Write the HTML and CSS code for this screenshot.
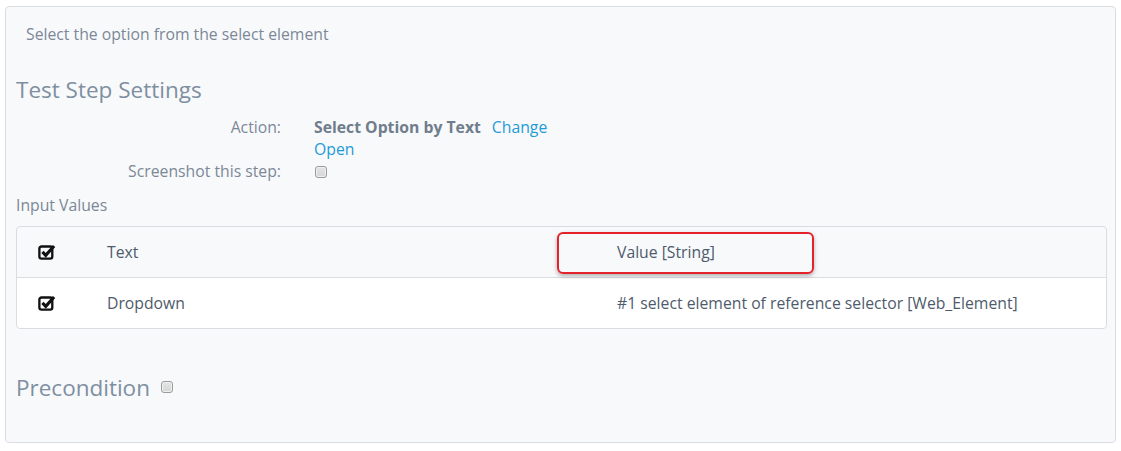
FILE: index.html
```html
<!DOCTYPE html>
<html>
<head>
<meta charset="utf-8">
<link rel="stylesheet" href="styles.css">
</head>
<body>
<div class="panel">
  <p class="desc">Select the option from the select element</p>
  <h2 class="heading">Test Step Settings</h2>
  <div class="form">
    <div class="label">Action:</div>
    <div class="value">
      <div><strong class="action-name">Select Option by Text</strong><a class="link change">Change</a></div>
      <div><a class="link">Open</a></div>
    </div>
    <div class="label">Screenshot this step:</div>
    <div class="value"><span class="box"></span></div>
  </div>
  <div class="section-label">Input Values</div>
  <div class="table">
    <div class="row">
      <div class="cell check"><svg width="18" height="17" viewBox="0 0 17 16"><rect x="1.3" y="3.3" width="12.2" height="11.4" rx="2" fill="none" stroke="#111" stroke-width="2.2"/><polyline points="4.2,8.4 7.3,11.6 15.2,2.8" fill="none" stroke="#111" stroke-width="3" stroke-linejoin="miter"/></svg></div>
      <div class="cell">Text</div>
      <div class="cell">Value [String]</div>
    </div>
    <div class="row alt">
      <div class="cell check"><svg width="18" height="17" viewBox="0 0 17 16"><rect x="1.3" y="3.3" width="12.2" height="11.4" rx="2" fill="none" stroke="#111" stroke-width="2.2"/><polyline points="4.2,8.4 7.3,11.6 15.2,2.8" fill="none" stroke="#111" stroke-width="3" stroke-linejoin="miter"/></svg></div>
      <div class="cell">Dropdown</div>
      <div class="cell">#1 select element of reference selector [Web_Element]</div>
    </div>
    <div class="highlight"></div>
  </div>
  <h2 class="heading precondition">Precondition <span class="box"></span></h2>
</div>
</body>
</html>
```

FILE: styles.css
```css
html, body {
  margin: 0;
  padding: 0;
  background: #ffffff;
}
body {
  font-family: "Open Sans", "Liberation Sans", sans-serif;
  color: #6f7d8c;
}
.panel {
  margin: 6px 5px 0 5px;
  width: 1091px;
  height: 435px;
  border: 1px solid #d9dde2;
  border-radius: 4px;
  background: #f8f9fb;
  padding: 0 8px 0 10px;
}
.desc {
  margin: 17px 0 0 10px;
  font-size: 15.75px;
  line-height: 20px;
  color: #7c8898;
}
.heading {
  margin: 30px 0 0 0;
  font-size: 22.5px;
  line-height: 32px;
  font-weight: 400;
  color: #7e8fa1;
}
.form {
  margin-top: 10px;
  display: grid;
  grid-template-columns: 265px 1fr;
  column-gap: 33px;
  font-size: 15.75px;
  line-height: 22px;
}
.label {
  text-align: right;
  color: #7c8898;
}
.action-name {
  font-weight: 700;
  color: #6f7d8c;
}
.link {
  color: #1f9bd7;
  text-decoration: none;
}
.change {
  margin-left: 11px;
}
.box {
  display: inline-block;
  width: 10px;
  height: 10px;
  border: 1px solid #9b9b9b;
  border-radius: 3px;
  background: linear-gradient(#e4e4e4, #d6d6d6);
  box-shadow: inset 0 0 0 1px #f0f0f0;
  vertical-align: middle;
}
.value .box {
  margin: 0 0 2px 1px;
}
.section-label {
  margin-top: 13px;
  font-size: 15.75px;
  line-height: 20px;
  color: #7c8898;
}
.table {
  position: relative;
  margin-top: 11px;
  border: 1px solid #d9dde2;
  border-radius: 4px;
  font-size: 15.75px;
  color: #4e5b6c;
}
.row {
  display: grid;
  grid-template-columns: 90px 510px 1fr;
  height: 50px;
  align-items: center;
}
.row.alt {
  border-top: 1px solid #d9dde2;
  background: #ffffff;
  border-radius: 0 0 4px 4px;
}
.check {
  padding-left: 21px;
  display: flex;
  align-items: center;
}
.check svg {
  margin-top: -1px;
}
.highlight {
  position: absolute;
  left: 540px;
  top: 5px;
  width: 253px;
  height: 38px;
  border: 2px solid #e4222a;
  border-radius: 6px;
  box-shadow: 0 2px 4px rgba(0, 0, 0, 0.3);
}
.precondition {
  margin-top: 43px;
}
.precondition .box {
  margin: 0 0 5px 5px;
}
```
